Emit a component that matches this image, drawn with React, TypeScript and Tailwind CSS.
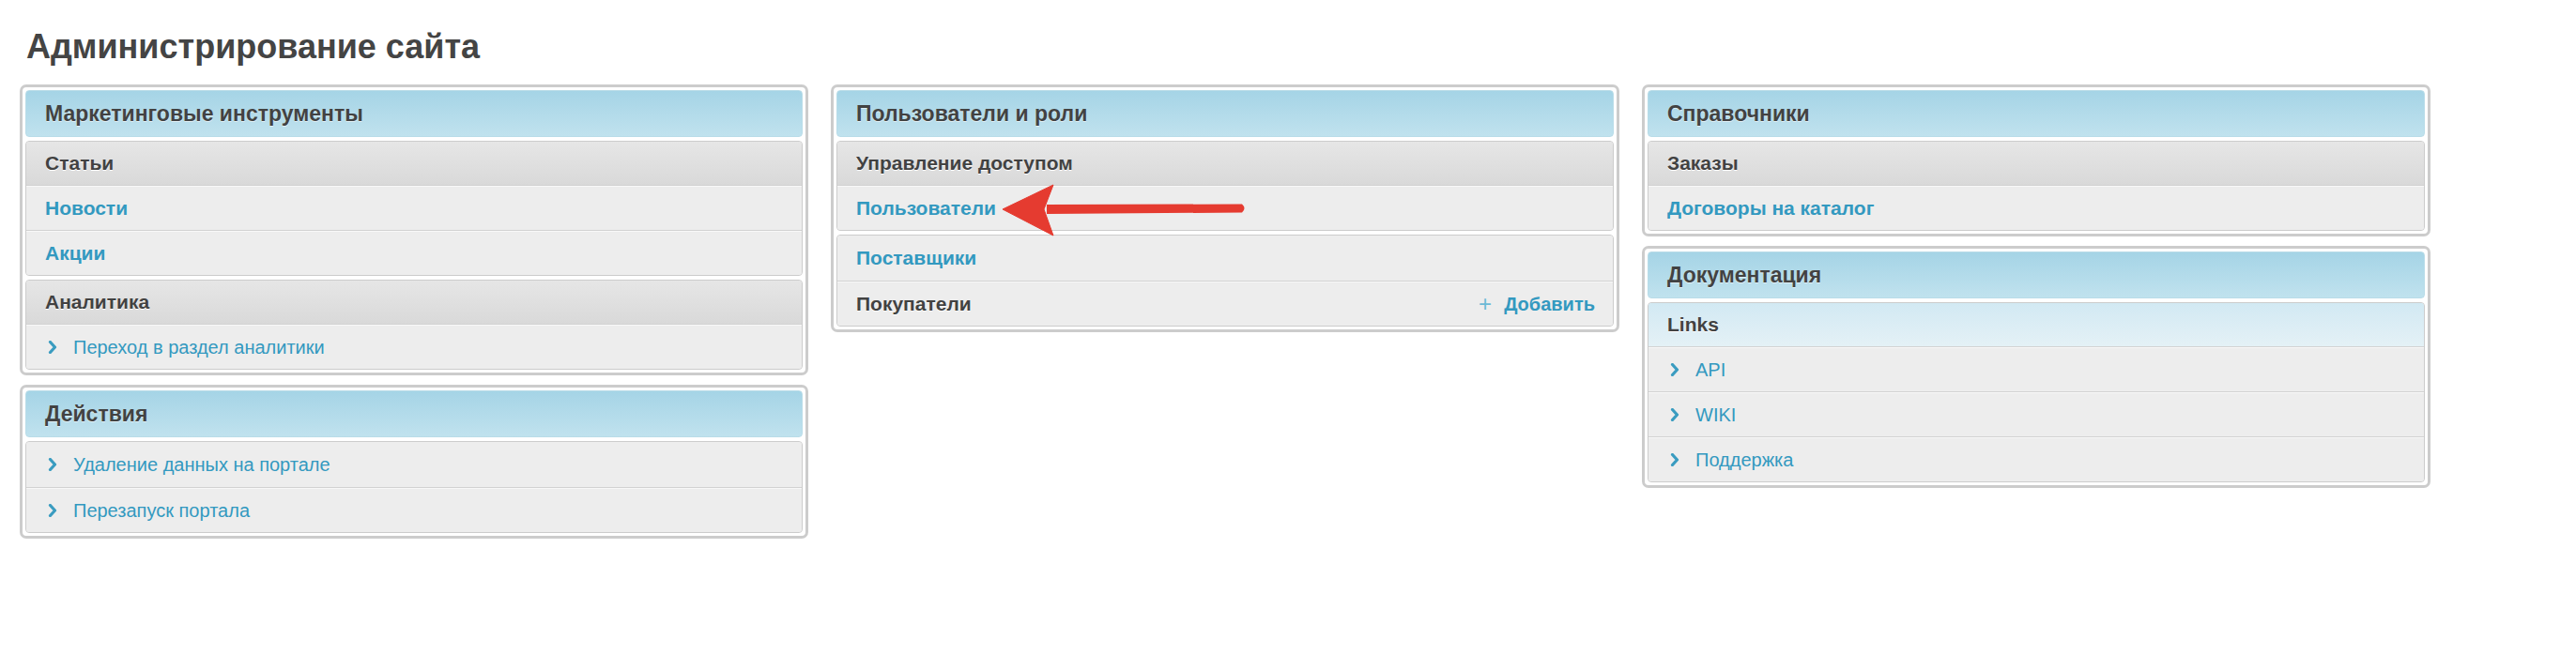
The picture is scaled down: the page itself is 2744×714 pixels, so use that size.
import React from "react";

const FONT = { fontFamily: '"Liberation Sans", Arial, sans-serif' };

function Chevron() {
  return (
    <svg width="10" height="14" viewBox="0 0 10 14" className="shrink-0">
      <path d="M2.5 1.5 L7.5 7 L2.5 12.5" fill="none" stroke="#3a9cc0" strokeWidth="3.2" strokeLinecap="round" strokeLinejoin="round" />
    </svg>
  );
}

function Panel({ title, children }: { title: string; children: React.ReactNode }) {
  return (
    <div className="border-[3px] border-[#cccccc] rounded-[7px] p-[3px] bg-white flex flex-col gap-[4px]">
      <div className="h-[50px] rounded-[4px] border border-[#b9dce8] bg-gradient-to-b from-[#a5d4e6] to-[#c0e2ee] flex items-center pl-[20px] text-[23px] font-bold text-[#424242] [text-shadow:0_1px_0_rgba(255,255,255,0.6)]">
        {title}
      </div>
      {children}
    </div>
  );
}

function Group({ children }: { children: React.ReactNode }) {
  return <div className="border border-[#cccccc] rounded-[4px] overflow-hidden bg-[#ededed]">{children}</div>;
}

function GroupHeader({ text, light }: { text: string; light?: boolean }) {
  return (
    <div
      className={
        "h-[46px] flex items-center pl-[20px] text-[21px] font-bold text-[#424242] [text-shadow:0_1px_0_#ffffff] " +
        (light ? "bg-gradient-to-b from-[#d2e9f3] to-[#e4f1f6]" : "bg-gradient-to-b from-[#e6e6e6] to-[#d9d9d9]")
      }
    >
      {text}
    </div>
  );
}

function Item({ text, first, chevron, dark, right }: { text: string; first?: boolean; chevron?: boolean; dark?: boolean; right?: React.ReactNode }) {
  return (
    <div
      className={
        "h-[48px] flex items-center bg-[#ededed] " +
        (first ? "" : "border-t border-[#d2d2d2] shadow-[inset_0_1px_0_#f8f8f8] ")
      }
    >
      {chevron ? (
        <div className="flex items-center pl-[23px] gap-[17px]">
          <Chevron />
          <span className="text-[20px] text-[#3399c0]">{text}</span>
        </div>
      ) : (
        <span className={"pl-[20px] text-[21px] font-bold " + (dark ? "text-[#424242] [text-shadow:0_1px_0_#ffffff]" : "text-[#3399c0]")}>{text}</span>
      )}
      {right ? <div className="ml-auto pr-[19px]">{right}</div> : null}
    </div>
  );
}

export default function App() {
  return (
    <div className="relative w-[2744px] h-[714px] bg-white" style={FONT}>
      <div className="pl-[28px] pt-[30px] h-[90px]">
        <h1 className="text-[36px] leading-[40px] font-bold text-[#444444]">Администрирование сайта</h1>
      </div>
      <div className="flex gap-[24px] pl-[21px] items-start">
        <div className="w-[840px] flex flex-col gap-[10px]">
          <Panel title="Маркетинговые инструменты">
            <Group>
              <GroupHeader text="Статьи" />
              <Item text="Новости" />
              <Item text="Акции" />
            </Group>
            <Group>
              <GroupHeader text="Аналитика" />
              <Item text="Переход в раздел аналитики" chevron />
            </Group>
          </Panel>
          <Panel title="Действия">
            <Group>
              <Item text="Удаление данных на портале" chevron first />
              <Item text="Перезапуск портала" chevron />
            </Group>
          </Panel>
        </div>
        <div className="w-[840px] flex flex-col gap-[10px]">
          <Panel title="Пользователи и роли">
            <Group>
              <GroupHeader text="Управление доступом" />
              <Item text="Пользователи" />
            </Group>
            <Group>
              <Item text="Поставщики" first />
              <Item
                text="Покупатели"
                dark
                right={
                  <span className="flex items-center gap-[13px]">
                    <span className="text-[24px] leading-none font-light text-[#6bbad6]">+</span>
                    <span className="text-[20px] font-bold text-[#3399c0]">Добавить</span>
                  </span>
                }
              />
            </Group>
          </Panel>
        </div>
        <div className="w-[840px] flex flex-col gap-[10px]">
          <Panel title="Справочники">
            <Group>
              <GroupHeader text="Заказы" />
              <Item text="Договоры на каталог" />
            </Group>
          </Panel>
          <Panel title="Документация">
            <Group>
              <GroupHeader text="Links" light />
              <Item text="API" chevron />
              <Item text="WIKI" chevron />
              <Item text="Поддержка" chevron />
            </Group>
          </Panel>
        </div>
      </div>
      <svg className="absolute left-[1060px] top-[190px]" width="280" height="70" viewBox="0 0 280 70">
        <path d="M55 28 L263 27.5 Q268 32 263 36.5 L55 38 Z" fill="#e53b30" />
        <path d="M8 33 L62 7 L52 33 L62 61 Z" fill="#e53b30" stroke="#e53b30" strokeWidth="1" strokeLinejoin="round" />
      </svg>
    </div>
  );
}
